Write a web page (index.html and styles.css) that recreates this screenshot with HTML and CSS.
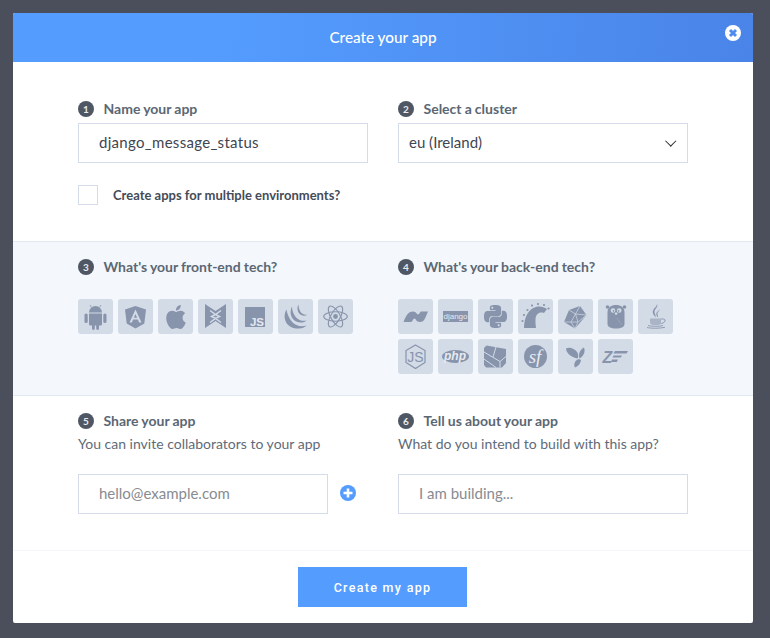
FILE: index.html
```html
<!DOCTYPE html>
<html lang="en">
<head>
    <meta charset="UTF-8">
    <meta name="viewport" content="width=device-width, initial-scale=1.0">
    <title>Create your app</title>
    <link rel="stylesheet" href="styles.css">
</head>
<body>
    <div class="modal">
        <div class="modalHeader">
            <span>Create your app</span>
            <svg class="closeIcon" viewBox="0 0 16 16">
                <circle cx="8" cy="8" r="8" fill="#fff"/>
                <path d="M5 5l6 6M11 5l-6 6" stroke="#4f8cee" stroke-width="3"/>
            </svg>
        </div>

        <div class="section topSection">
            <div class="column">
                <div class="stepLabel"><span class="badge">1</span>Name your app</div>
                <input class="field nameField" type="text" value="django_message_status">
                <label class="checkRow"><input type="checkbox"><span>Create apps for multiple environments?</span></label>
            </div>
            <div class="column">
                <div class="stepLabel"><span class="badge">2</span>Select a cluster</div>
                <div class="selectWrap">
                    <select class="field clusterSelect">
                        <option>eu (Ireland)</option>
                        <option>us (Oregon)</option>
                    </select>
                </div>
            </div>
        </div>

        <div class="section techSection">
            <div class="column">
                <div class="stepLabel"><span class="badge">3</span>What's your front-end tech?</div>
                <div class="techGrid">
                    <div class="tile"><svg viewBox="0 0 35 35">
                        <path d="M11 13.500a6.500 6.500 0 0 1 13 0z"/>
                        <path d="M13.500 8.500l-1.500-2.500M21.500 8.500l1.500-2.500" stroke="#8794ac" stroke-width=".8"/>
                        <path d="M11 14.500h13v10.500a1.500 1.500 0 0 1-1.500 1.500H21v3a1.400 1.400 0 0 1-2.800 0v-3h-1.400v3a1.400 1.400 0 0 1-2.800 0v-3h-1.500a1.500 1.500 0 0 1-1.500-1.500z"/>
                        <rect x="6.500" y="14.500" width="3.200" height="9.500" rx="1.600"/>
                        <rect x="25.300" y="14.500" width="3.200" height="9.500" rx="1.600"/>
                    </svg></div>
                    <div class="tile"><svg viewBox="0 0 35 35">
                        <path fill-rule="evenodd" d="M17.500 7l10.500 3.500-1.700 14L17.500 29.500l-8.800-5L7 10.500zM17.500 10.500l-6 13h2.400l1.200-3h4.800l1.200 3h2.400zM17.500 15l1.600 3.800h-3.200z"/>
                    </svg></div>
                    <div class="tile"><svg viewBox="0 0 24 24" class="appleIcon">
                        <path d="M12.152 6.896c-.948 0-2.415-1.078-3.960-1.040-2.040.027-3.910 1.183-4.961 3.014-2.117 3.675-.546 9.103 1.519 12.090 1.013 1.454 2.208 3.090 3.792 3.039 1.520-.065 2.090-.987 3.935-.987 1.831 0 2.350.987 3.960.948 1.637-.026 2.676-1.480 3.676-2.948 1.156-1.688 1.636-3.325 1.662-3.415-.039-.013-3.182-1.221-3.220-4.857-.026-3.040 2.480-4.494 2.597-4.559-1.429-2.090-3.623-2.324-4.390-2.376-2-.156-3.675 1.090-4.610 1.090zM15.530 3.830c.843-1.012 1.400-2.427 1.245-3.830-1.207.052-2.662.805-3.532 1.818-.780.896-1.454 2.338-1.273 3.714 1.338.104 2.715-.688 3.559-1.701"/>
                    </svg></div>
                    <div class="tile"><svg viewBox="0 0 35 35">
                        <path d="M7 5l10.500 7L28 5v24l-10.500-7L7 29z"/>
                        <path d="M12 11.500l5.500 4 5.500-4M12 23.500l5.500-4 5.500 4M13.500 17.500l4-2 4 2-4 2z" fill="none" stroke="#d3dbe6" stroke-width="1.500"/>
                    </svg></div>
                    <div class="tile"><svg viewBox="0 0 35 35">
                        <rect x="7" y="8" width="20" height="20"/>
                        <text class="iconText jsText" x="26" y="26.500" text-anchor="end">JS</text>
                    </svg></div>
                    <div class="tile"><svg viewBox="0 0 35 35">
                        <path d="M8.500 10.500C4 18 7.500 30 21 29.500c3-.1 5.500-1.200 7.500-3-3.500 1-7 1-10-.5C13 23.500 9.500 17 8.500 10.500z"/>
                        <path d="M14 7.500c-3.500 6.500-.5 15.500 8.500 16 2.300.1 4.500-.5 6-2-3 .7-6.200 .3-8.600-1.500C16.500 17.500 14 12.500 14 7.500z"/>
                        <path d="M20.500 5.500c-2.500 4.500-.2 11 5.500 11.200 1.200 0 2.300-.3 3.200-1-2 .2-4.200-.2-5.700-1.700C21.800 12.300 20.500 9 20.500 5.500z"/>
                    </svg></div>
                    <div class="tile"><svg viewBox="0 0 35 35">
                        <g fill="none" stroke="#8794ac" stroke-width="1.100">
                            <ellipse cx="17.500" cy="17.500" rx="11.800" ry="4.700"/>
                            <ellipse cx="17.500" cy="17.500" rx="11.800" ry="4.700" transform="rotate(60 17.500 17.500)"/>
                            <ellipse cx="17.500" cy="17.500" rx="11.800" ry="4.700" transform="rotate(120 17.500 17.500)"/>
                        </g>
                        <circle cx="17.500" cy="17.500" r="2.400"/>
                    </svg></div>
                </div>
            </div>
            <div class="column">
                <div class="stepLabel"><span class="badge">4</span>What's your back-end tech?</div>
                <div class="techGrid">
                    <div class="tile"><svg viewBox="0 0 35 35">
                        <path d="M5.500 23C8 17 10 12.500 15 12.500c3.500 0 3.500 3 5 3 1.500 0 2-3 3-3h7l-3 7c-1 2.500-3 3.500-5 3.500-4 0-4-3.500-5.500-3.500-1.500 0-2 3.500-3.500 3.500z"/>
                    </svg></div>
                    <div class="tile"><svg viewBox="0 0 35 35">
                        <rect x="5" y="12" width="25" height="11"/>
                        <text class="iconText djangoText" x="17.500" y="19.800" text-anchor="middle">django</text>
                    </svg></div>
                    <div class="tile"><svg viewBox="0 0 24 24" class="pythonIcon">
                        <path d="M14.250.180l.900.200.730.260.590.300.450.320.340.340.250.340.160.330.100.300.040.260.020.200-.010.130V8.500l-.050.630-.130.550-.210.460-.260.380-.300.310-.330.250-.350.190-.350.140-.330.100-.300.070-.260.040-.210.020H8.770l-.690.050-.590.140-.500.220-.410.270-.330.320-.270.350-.200.360-.150.370-.100.350-.070.320-.040.270-.020.210v3.060H3.170l-.210-.030-.280-.070-.320-.120-.350-.180-.360-.260-.360-.360-.350-.460-.320-.590-.280-.730-.210-.880-.140-1.050-.050-1.230.060-1.220.160-1.040.240-.870.320-.710.360-.570.400-.440.420-.330.420-.240.400-.160.360-.100.320-.050.240-.010h.160l.060.010h8.160v-.830H6.180l-.010-2.750-.020-.370.050-.340.110-.310.170-.280.250-.260.310-.230.380-.200.440-.180.510-.150.580-.120.640-.100.710-.060.770-.040.840-.020 1.270.050zm-6.300 1.980l-.230.330-.080.410.080.410.230.340.330.220.410.090.410-.090.330-.220.230-.340.080-.410-.080-.410-.230-.330-.330-.220-.410-.090-.410.090zm13.090 3.950l.280.060.320.120.350.180.360.270.360.350.350.470.320.590.280.730.210.880.140 1.040.050 1.230-.060 1.230-.160 1.040-.240.860-.320.710-.360.570-.400.450-.420.330-.420.240-.400.160-.360.090-.320.050-.240.020-.160-.010h-8.220v.820h5.840l.010 2.760.020.360-.050.340-.110.310-.170.290-.250.250-.310.240-.380.200-.440.170-.510.150-.580.130-.640.090-.710.070-.770.040-.840.010-1.270-.040-1.070-.140-.900-.200-.730-.250-.590-.300-.450-.330-.340-.340-.250-.340-.160-.330-.100-.300-.040-.250-.020-.200.010-.130v-5.340l.050-.640.130-.540.210-.460.260-.380.300-.320.330-.240.350-.200.350-.140.330-.100.300-.060.260-.040.210-.020.130-.010h5.840l.690-.050.590-.140.500-.210.410-.280.330-.320.270-.350.200-.360.150-.360.100-.350.070-.320.040-.280.020-.21V6.070h2.090l.140.010zm-6.470 14.250l-.230.330-.080.410.080.410.230.330.330.230.410.08.410-.08.330-.23.230-.33.080-.41-.08-.41-.230-.33-.330-.23-.410-.08-.410.080z"/>
                    </svg></div>
                    <div class="tile"><svg viewBox="0 0 35 35">
                        <path d="M6 29C6 19 10 10 18 8c4-1 8 0 11 2l-3 4c-5-1.500-8 1-8.500 6-.2 3 0 6 .5 9z"/>
                        <circle cx="4.500" cy="22" r="1.100"/><circle cx="6" cy="16" r="1.100"/><circle cx="9.500" cy="11" r="1.100"/>
                        <circle cx="14" cy="6.500" r="1.100"/><circle cx="20" cy="5" r="1.100"/><circle cx="26" cy="6" r="1.100"/>
                        <circle cx="30.500" cy="9.500" r="1.100"/>
                    </svg></div>
                    <div class="tile"><svg viewBox="0 0 35 35">
                        <path d="M22 7l6.500 9L17 29.500 6 23l5-12z"/>
                        <path d="M11 11l6.500 4L22 7M17.500 15l11 1M17.500 15L20 23l8.500-7M17.500 15L13 23l7 0M13 23L6 23M13 23l4 6.500M20 23l-3 6.500" fill="none" stroke="#d3dbe6" stroke-width=".7"/>
                    </svg></div>
                    <div class="tile"><svg viewBox="0 0 35 35">
                        <path d="M9.500 13c0-4.500 3.800-7 8.500-7s8.500 2.500 8.500 7v12c0 3-3.500 4.500-8.500 4.500S9.500 28 9.500 25z"/>
                        <circle cx="9.500" cy="8" r="1.800"/><circle cx="26.500" cy="8" r="1.800"/>
                        <circle cx="15" cy="11.500" r="2.300" fill="#d3dbe6"/><circle cx="21.200" cy="11.500" r="2.300" fill="#d3dbe6"/>
                        <circle cx="15.500" cy="11.800" r=".9"/><circle cx="20.700" cy="11.800" r=".9"/>
                        <rect x="16.900" y="13.500" width="2.400" height="2.200" rx=".8" fill="#d3dbe6"/>
                        <path d="M19 19l5 7" stroke="#a9b3c5" stroke-width=".5"/>
                    </svg></div>
                    <div class="tile"><svg viewBox="0 0 35 35">
                        <path d="M19 5c1.500 3.500-3 5-2.500 8.500.2 1.500 1.500 2.500 1.300 5-1-2-3.300-3-3-6 .4-3 4-4.500 4.200-7.500zM21.500 10c.5 2-2.500 3-2 5.500.2 1 .8 1.500 .6 3-.8-1-2-2-1.800-4 .2-2 3-2.500 3.200-4.500z"/>
                        <path d="M12 19.500h11V23c0 1.800-1.500 3-3 3h-5c-1.500 0-3-1.200-3-3z" opacity=".55"/>
                        <path d="M23 20c3-.5 4.500 .5 4 2-.5 1.700-3 2.500-4.500 2.700" fill="none" stroke="#8794ac" stroke-width=".9"/>
                        <path d="M10 26.500c3 1 12 1 15 0M9 28.500c4 1 13 1 18-.3" fill="none" stroke="#8794ac" stroke-width=".9"/>
                    </svg></div>
                    <div class="tile"><svg viewBox="0 0 35 35">
                        <path d="M17.500 6L27 11.500v12L17.500 29.500 8 23.500v-12z" fill="none" stroke="#8794ac" stroke-width="1.200"/>
                        <text class="iconText nodeText" x="17.500" y="23" text-anchor="middle">JS</text>
                    </svg></div>
                    <div class="tile"><svg viewBox="0 0 35 35">
                        <ellipse cx="17.500" cy="17.500" rx="13.500" ry="6.500"/>
                        <text class="iconText phpText" x="17" y="21" text-anchor="middle">php</text>
                    </svg></div>
                    <div class="tile"><svg viewBox="0 0 35 35">
                        <path d="M8.500 6.500L28 10v14l-4 4.500H8L6 26V9z"/>
                        <path d="M6 13l16 9.500 6-5M6 20l12 8.500M22 22.500v6M18 8l-3 10" fill="none" stroke="#d3dbe6" stroke-width="1"/>
                    </svg></div>
                    <div class="tile"><svg viewBox="0 0 35 35">
                        <circle cx="17.500" cy="17.500" r="11.500"/>
                        <text class="iconText sfText" x="17" y="24" text-anchor="middle">sf</text>
                    </svg></div>
                    <div class="tile"><svg viewBox="0 0 35 35">
                        <path d="M8 9.500c4-2 10 .5 12 5.500 .5 2 0 3.500-.5 4.500-5.500-1-11-4.500-11.500-10z"/>
                        <path d="M26 8.500c1.500 3.500 0 8.500-4.500 11-1.500-4.500 .5-9 4.500-11z"/>
                        <path d="M19.500 20.500c1.500-.5 3 0 3.500 .5-.5 3-2 6-6 7.500-1.500-2.500-.5-6.500 2.500-8z"/>
                    </svg></div>
                    <div class="tile"><svg viewBox="0 0 35 35">
                        <text class="iconText zfText" x="4.500" y="23.500">Z</text>
                        <path d="M17 12h13l-1.500 2.500H15.500zM15.500 16.500h8.500l-1.200 2H14.500zM14 20.500h6l-1.200 2.500h-5.800z"/>
                    </svg></div>
                </div>
            </div>
        </div>

        <div class="section shareSection">
            <div class="column">
                <div class="stepLabel"><span class="badge">5</span>Share your app</div>
                <p class="hint">You can invite collaborators to your app</p>
                <div class="inviteRow">
                    <input class="field inviteField" type="text" placeholder="hello@example.com">
                    <svg class="plusIcon" viewBox="0 0 16 16">
                        <circle cx="8" cy="8" r="8" fill="#549dff"/>
                        <path d="M8 3.500v9M3.500 8h9" stroke="#fff" stroke-width="2.600"/>
                    </svg>
                </div>
            </div>
            <div class="column">
                <div class="stepLabel"><span class="badge">6</span>Tell us about your app</div>
                <p class="hint">What do you intend to build with this app?</p>
                <div class="inviteRow">
                    <input class="field" type="text" placeholder="I am building...">
                </div>
            </div>
        </div>

        <div class="modalFooter">
            <button class="createButton" type="button">Create my app</button>
        </div>
    </div>
</body>
</html>
```

FILE: styles.css
```css
* {
    box-sizing: border-box;
}
html, body {
    height: 100%;
}
body {
    margin: 0;
    padding: 13px 17px 15px 13px;
    overflow: hidden;
    background-color: #4a4f5b;
    font-family: "Lato", "Liberation Sans", sans-serif;
    color: #3f4551;
}
.modal {
    display: flex;
    flex-direction: column;
    width: 740px;
    height: 610px;
    border-radius: 2px;
    background-color: #fff;
    overflow: hidden;
}
.modalHeader {
    position: relative;
    display: flex;
    align-items: center;
    justify-content: center;
    flex: none;
    height: 49px;
    padding-bottom: 1px;
    background: linear-gradient(95deg, #549dff 0%, #549dff 25%, #4a84e8 100%);
    color: #fff;
    font-size: 15.300px;
    font-weight: 500;
}
.closeIcon {
    position: absolute;
    top: 12px;
    right: 12px;
    width: 16px;
    height: 16px;
}
.section {
    display: grid;
    grid-template-columns: 290px 290px;
    column-gap: 30px;
    flex: none;
    padding-left: 65px;
    padding-right: 65px;
}
.topSection {
    height: 179px;
    padding-top: 39px;
}
.techSection {
    height: 155px;
    padding-top: 17px;
    background-color: #f4f7fb;
    border-top: 1px solid #e3e9f1;
    border-bottom: 1px solid #e3e9f1;
}
.shareSection {
    height: 154px;
    padding-top: 17px;
}
.stepLabel {
    display: flex;
    align-items: flex-start;
    height: 16px;
    color: #5b6774;
    font-size: 14px;
    line-height: 16px;
    font-weight: 700;
    word-spacing: -.3px;
}
.badge {
    display: flex;
    align-items: center;
    justify-content: center;
    flex: none;
    width: 16px;
    height: 16px;
    margin-right: 9.500px;
    border-radius: 50%;
    background-color: #4e5763;
    color: #e8ebef;
    font-size: 10px;
    font-weight: 700;
}
.field {
    display: block;
    width: 100%;
    height: 40px;
    padding: 0 20px 2px;
    border: 1px solid #d3dce8;
    border-radius: 0;
    outline: none;
    background-color: #fff;
    color: #3f4551;
    font-family: inherit;
    font-size: 15px;
}
.field::placeholder {
    color: #888b91;
    opacity: 1;
}
.nameField {
    margin-top: 6px;
    letter-spacing: .3px;
}
.selectWrap {
    position: relative;
    margin-top: 6px;
}
.selectWrap::after {
    content: "";
    position: absolute;
    top: 14px;
    right: 14px;
    width: 6.500px;
    height: 6.500px;
    border-right: 1.400px solid #2b2e36;
    border-bottom: 1.400px solid #2b2e36;
    transform: rotate(45deg);
    pointer-events: none;
}
.clusterSelect {
    appearance: none;
    padding: 0 10px 2px;
}
.checkRow {
    display: flex;
    align-items: center;
    margin-top: 22px;
    color: #454b58;
    font-size: 13px;
    font-weight: 700;
}
.checkRow input {
    appearance: none;
    flex: none;
    width: 20px;
    height: 20px;
    margin: 0 15px 0 0;
    border: 1px solid #d3dce8;
    background-color: #fff;
}
.techGrid {
    display: flex;
    flex-wrap: wrap;
    gap: 5px;
    margin-top: 24px;
}
.tile {
    display: flex;
    align-items: center;
    justify-content: center;
    width: 35px;
    height: 35px;
    border-radius: 3px;
    background-color: #d3dbe6;
}
.tile svg {
    width: 35px;
    height: 35px;
    fill: #8794ac;
}
.tile .appleIcon {
    width: 24px;
    height: 24px;
}
.tile .pythonIcon {
    width: 23px;
    height: 23px;
}
.iconText {
    fill: #e6eaf0;
    font-family: "Liberation Sans", sans-serif;
    font-weight: 700;
}
.jsText {
    font-size: 11.500px;
}
.djangoText {
    font-size: 8px;
    font-weight: 400;
}
.nodeText {
    fill: #8794ac;
    font-size: 14px;
    font-weight: 400;
}
.phpText {
    font-size: 12px;
    font-style: italic;
}
.sfText {
    font-family: "Liberation Serif", serif;
    font-size: 19px;
    font-style: italic;
    font-weight: 400;
}
.zfText {
    fill: #8794ac;
    font-size: 16px;
    font-style: italic;
}
.hint {
    margin: 6px 0 0;
    height: 18px;
    color: #5f6b78;
    font-size: 14px;
    line-height: 18px;
}
.inviteRow {
    display: flex;
    align-items: center;
    margin-top: 21px;
}
.inviteField {
    width: 250px;
    flex: none;
}
.plusIcon {
    flex: none;
    width: 16px;
    height: 16px;
    margin-left: 12px;
    margin-bottom: 2px;
}
.modalFooter {
    display: flex;
    justify-content: center;
    flex: 1;
    padding-top: 16px;
    padding-right: 1px;
    border-top: 1px solid #f4f6fa;
}
.createButton {
    width: 169px;
    height: 40px;
    border: none;
    border-radius: 0;
    background-color: #549dff;
    color: #fff;
    font-family: "Roboto", sans-serif;
    font-size: 12.500px;
    font-weight: 500;
    letter-spacing: 1.300px;
}
```
